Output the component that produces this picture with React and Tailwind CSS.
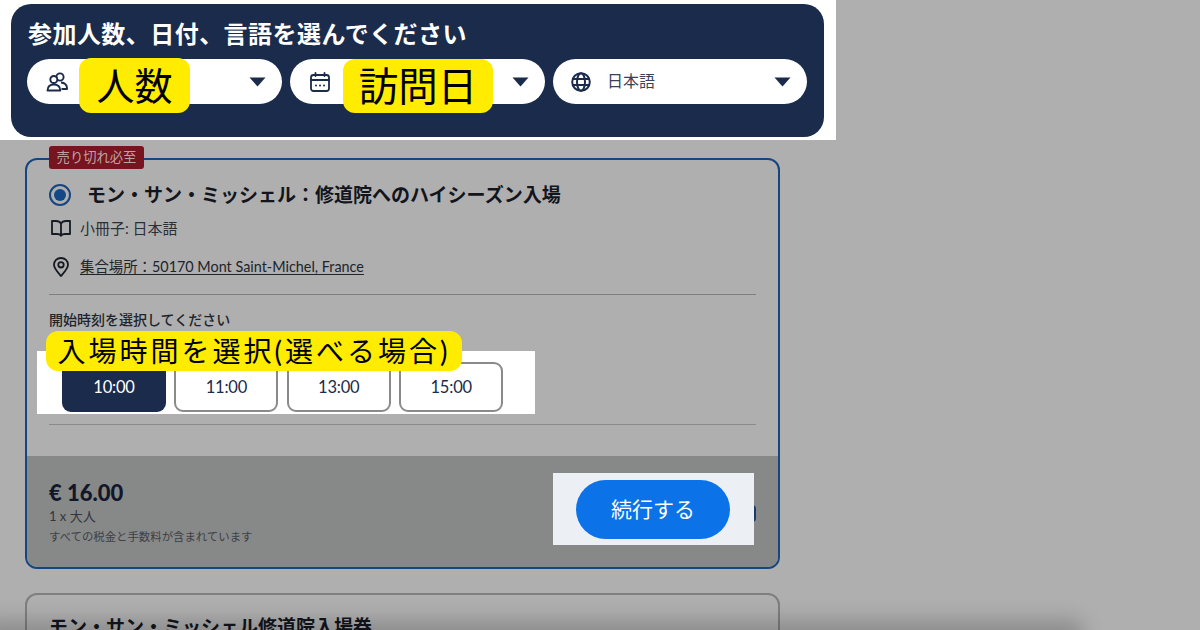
import React from "react";

const JP = "font-['Lato','Noto_Sans_CJK_JP',sans-serif]";

function Caret() {
  return (
    <svg width="17" height="10" viewBox="0 0 17 10" className="shrink-0">
      <path d="M0.5 0.5H16.5L8.5 9.5Z" fill="#1a2b4b" />
    </svg>
  );
}

function People() {
  return (
    <svg width="22" height="20" viewBox="0 0 22 20" fill="none" stroke="#1a2b4b" strokeWidth="1.9" strokeLinejoin="round">
      <circle cx="14" cy="5" r="3.600" />
      <path d="M15 10.500c3.300.3 5.800 2.300 6 5.500v1h-5.500" />
      <circle cx="7.800" cy="7.500" r="3.500" fill="#fff" />
      <path d="M1.500 18.500c.2-4 2.600-6 6.300-6s6.300 2 6.500 6z" fill="#fff" />
    </svg>
  );
}

function Cal() {
  return (
    <svg width="20" height="20" viewBox="0 0 20 20" fill="none" stroke="#1a2b4b" strokeWidth="1.800" strokeLinecap="round">
      <rect x="1" y="3" width="18" height="16" rx="2.500" />
      <path d="M1 8H19M5.500 1V4M14.500 1V4" />
      <path d="M6 13.500h.01M10 13.500h.01M14 13.500h.01" strokeWidth="2" />
    </svg>
  );
}

function GlobeIcon() {
  return (
    <svg width="20" height="20" viewBox="0 0 20 20" fill="none" stroke="#1a2b4b" strokeWidth="2">
      <circle cx="10" cy="10" r="8.800" />
      <path d="M1.500 7H18.500M1.500 13H18.500" />
      <ellipse cx="10" cy="10" rx="4" ry="8.800" />
    </svg>
  );
}

function Book() {
  return (
    <svg width="20" height="17" viewBox="0 0 20 17" fill="none" stroke="#161a22" strokeWidth="1.800" strokeLinejoin="round">
      <path d="M10 3.500C9 1.800 7.500 1 5 1H1v13h5c2 0 3.300.5 4 1.800 .7-1.300 2-1.800 4-1.800h5V1h-4c-2.500 0-4 .8-5 2.500zV15.500" />
    </svg>
  );
}

function Pin() {
  return (
    <svg width="16" height="20" viewBox="0 0 16 20" fill="none" stroke="#161a22" strokeWidth="1.800" strokeLinejoin="round">
      <path d="M8 19C4 14.500 1 11.500 1 7.800 1 3.800 4 1 8 1s7 2.800 7 6.800c0 3.700-3 6.700-7 11.200z" />
      <circle cx="8" cy="7.800" r="2.700" />
    </svg>
  );
}

function Pill({ children, className }) {
  return (
    <div className={`flex h-[45px] items-center justify-between rounded-full bg-white pr-[16px] ${className}`}>
      {children}
    </div>
  );
}

function Time({ label, active }) {
  return (
    <button
      className={
        active
          ? "flex h-[50px] w-[104px] items-center justify-center rounded-[9px] bg-[#1a2b4b] text-[16.500px] tracking-[-0.2px] text-white"
          : "flex h-[50px] w-[104px] items-center justify-center rounded-[9px] border-2 border-[#8a8a8a] bg-white text-[16.500px] tracking-[-0.2px] text-[#1a2b4b]"
      }
    >
      {label}
    </button>
  );
}

export default function App() {
  return (
    <div className={`relative h-[630px] w-[1200px] overflow-hidden bg-[#afafaf] ${JP}`}>
      <div className="h-[140px] w-[836px] bg-white pl-[11px] pt-[4px]">
        <div className="h-[133px] w-[813px] rounded-[20px] bg-[#1a2b4b] px-[16px] pt-[14px]">
          <h1 className="h-[41px] pl-[1px] text-[24px] leading-[32px] font-bold tracking-[0.45px] text-white">
            参加人数、日付、言語を選んでください
          </h1>
          <div className="flex gap-[8px]">
            <Pill className="w-[255px] pl-[19px]">
              <People />
              <Caret />
            </Pill>
            <Pill className="w-[255px] pl-[20px]">
              <Cal />
              <Caret />
            </Pill>
            <Pill className="w-[254px] pl-[18px]">
              <div className="flex items-center gap-[16px]">
                <GlobeIcon />
                <span className="-translate-y-[1px] text-[16px] text-[#3a4255]">日本語</span>
              </div>
              <Caret />
            </Pill>
          </div>
        </div>
      </div>

      <div className="ml-[25px] mt-[18px] w-[755px]">
        <div className="relative h-[411px] rounded-[12px] border-2 border-[#17457f]">
          <div className="absolute left-[22px] top-[-14px] flex h-[23px] w-[95px] items-center justify-center rounded-[3px] bg-[#761420] text-[13.300px] text-[#c0a0a4]">
            売り切れ必至
          </div>

          <div className="flex h-[296px] flex-col px-[22px]">
            <div className="flex h-[57px] items-center gap-[16px] pt-[13px]">
              <span className="flex h-[22px] w-[22px] items-center justify-center rounded-full border-[2.500px] border-[#17457f]">
                <span className="h-[12px] w-[12px] rounded-full bg-[#134785]" />
              </span>
              <span className="text-[19px] leading-[24px] font-bold text-[#12151c]">
                モン・サン・ミッシェル：修道院へのハイシーズン入場
              </span>
            </div>
            <div className="flex h-[22px] items-center gap-[9px] pl-[2px]">
              <Book />
              <span className="text-[15px] text-[#2b2f38]">小冊子: 日本語</span>
            </div>
            <div className="mt-[17px] flex h-[22px] items-center gap-[11px] pl-[4px]">
              <Pin />
              <span className="text-[14.400px] text-[#20242c] underline underline-offset-2">
                集合場所：50170 Mont Saint-Michel, France
              </span>
            </div>
            <div className="mt-[16px] h-px bg-[#7f7f7f]" />
            <p className="mt-[15px] text-[14px] leading-[20px] font-medium text-[#20242c]">開始時刻を選択してください</p>
            <div className="-ml-[12px] mt-[21px] flex h-[63px] w-[498px] items-start gap-[8.400px] bg-white pl-[25px] pt-[11px]">
              <Time label="10:00" active />
              <Time label="11:00" />
              <Time label="13:00" />
              <Time label="15:00" />
            </div>
            <div className="mt-[10px] h-px bg-[#8a8a8a]" />
          </div>

          <div className="absolute inset-x-0 bottom-0 flex h-[111px] justify-between rounded-b-[10px] bg-[#878888] pl-[22px] pr-[24px] pt-[17px]">
            <div className="pt-[6px]">
              <div className="text-[22px] leading-[28px] font-black text-[#12172a]">€ 16.00</div>
              <div className="mt-[1px] text-[13px] leading-[16px] text-[#33363d]">1 x 大人</div>
              <div className="mt-[4px] text-[11.400px] leading-[18px] text-[#3d4046]">すべての税金と手数料が含まれています</div>
            </div>
            <div className="relative">
              <div className="absolute right-[-2px] top-[32px] h-[17px] w-[8px] rounded-full bg-[#1b3a6b]" />
              <div className="relative flex h-[72px] w-[201px] items-center justify-center bg-[#eceff4] pr-[1px]">
                <button className="h-[59px] w-[154px] rounded-full bg-[#0b72e7] text-[21px] text-white">続行する</button>
              </div>
            </div>
          </div>
        </div>

        <div className="mt-[24px] h-[100px] rounded-[12px] border-2 border-[#7f7f7f] px-[22px] pt-[20px]">
          <span className="text-[19px] leading-[24px] font-bold text-[#12151c]">モン・サン・ミッシェル修道院入場券</span>
        </div>
      </div>

      <div className="absolute -bottom-[18px] -left-[20px] h-[28px] w-[1105px] rounded-full bg-black/20 blur-[10px]" />

      <div className="absolute left-[79px] top-[58px] flex h-[55px] w-[111px] items-center justify-center rounded-[12px] bg-[#ffec00] text-[38px] text-black">
        人数
      </div>
      <div className="absolute left-[343px] top-[59px] flex h-[54px] w-[150px] items-center justify-center rounded-[12px] bg-[#ffec00] text-[39.500px] text-black">
        訪問日
      </div>
      <div className="absolute left-[46px] top-[331px] flex h-[40px] w-[416px] items-center justify-center rounded-[12px] bg-[#ffec00] text-[28px] tracking-[3px] text-black">
        入場時間を選択(選べる場合)
      </div>
    </div>
  );
}
